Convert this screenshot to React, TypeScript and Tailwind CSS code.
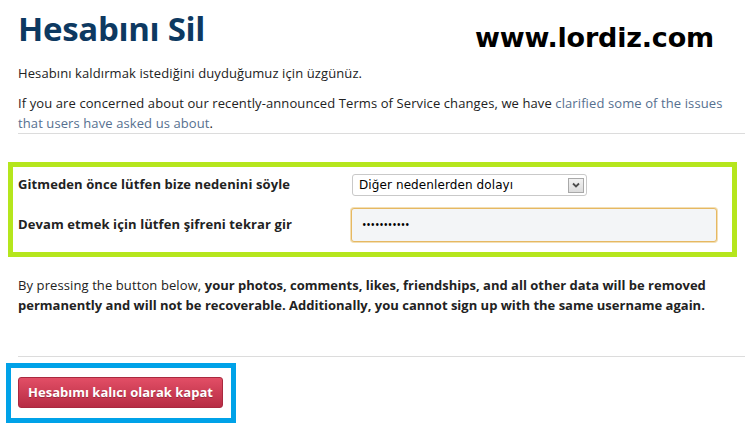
import React from "react";

const body = { fontFamily: '"Open Sans", "Liberation Sans", sans-serif' };

function SelectBox() {
  return (
    <div className="flex items-center justify-between w-[235px] h-[22px] border border-[#c9c9c9] rounded-[3px] bg-white pl-[6px] pr-[2px]">
      <span className="text-[12px] text-black" style={{ fontFamily: '"DejaVu Sans", Verdana, sans-serif' }}>
        Diğer nedenlerden dolayı
      </span>
      <span className="flex items-center justify-center w-[16px] h-[15px] border border-[#a9a9a9] bg-gradient-to-b from-[#f2f2f2] to-[#dcdcdc]">
        <svg width="8" height="6" viewBox="0 0 8 6">
          <path d="M1 1.5 L4 4.5 L7 1.5" fill="none" stroke="#4d4d4d" strokeWidth="1.8" />
        </svg>
      </span>
    </div>
  );
}

export default function App() {
  return (
    <div className="relative w-[750px] h-[430px] bg-white overflow-hidden text-[#222] pl-[18px] pr-[5px] tracking-[0.1px]" style={body}>
      {/* watermark */}
      <div
        className="absolute left-[475px] top-[18px] text-[27px] leading-[40px] font-bold text-black tracking-[-0.2px]"
        style={{ fontFamily: '"DejaVu Sans", Verdana, sans-serif' }}
      >
        www.lordiz.com
      </div>

      <h1 className="pt-[9px] text-[33px] leading-[40px] font-bold text-[#0d3961] tracking-[-0.3px]">Hesabını Sil</h1>

      <p className="mt-[14px] text-[13px] leading-[20px]">Hesabını kaldırmak istediğini duyduğumuz için üzgünüz.</p>
      <p className="mt-[10px] text-[13px] leading-[20px]">
        If you are concerned about our recently-announced Terms of Service changes, we have{" "}
        <a className="text-[#56708f]">clarified some of the issues that users have asked us about</a>.
      </p>
      <div className="h-px bg-[#dcdcdc]" />

      {/* Form box */}
      <div className="mt-[28px] ml-[-10px] w-[729px] border-[5px] border-[#b5e61d] pl-[5px] pt-[7px] pb-[10px]">
        <div className="flex items-center">
          <label className="w-[334px] text-[13px] font-bold">Gitmeden önce lütfen bize nedenini söyle</label>
          <SelectBox />
        </div>
        <div className="flex items-center mt-[12px]">
          <label className="w-[333px] text-[13px] font-bold">Devam etmek için lütfen şifreni tekrar gir</label>
          <div className="flex items-center w-[366px] h-[34px] border border-[#e6b862] rounded-[3px] bg-[#f3f5f7] pl-[10px] shadow-[0_0_0_1px_#f3dfb4]">
            <span className="text-[12px] tracking-[-0.2px] text-black">•••••••••••</span>
          </div>
        </div>
      </div>

      <p className="mt-[18px] pr-[20px] text-[13px] leading-[20px]">
        By pressing the button below,{" "}
        <strong className="font-bold tracking-normal">
          your photos, comments, likes, friendships, and all other data will be removed permanently and will not be
          recoverable. Additionally, you cannot sign up with the same username again.
        </strong>
      </p>

      <div className="mt-[41px] h-px bg-[#dcdcdc]" />

      {/* Button box */}
      <div className="mt-[6px] ml-[-12px] inline-block border-[5px] border-[#00a2e8] pl-[7px] pr-[8px] pt-[9px] pb-[10px]">
        <button
          type="button"
          className="w-[205px] h-[31px] rounded-[3px] border border-[#a9293f] bg-gradient-to-b from-[#e24e66] to-[#b72c44] text-white text-[13px] font-bold tracking-normal [text-shadow:0_1px_0_rgba(0,0,0,0.25)]"
        >
          Hesabımı kalıcı olarak kapat
        </button>
      </div>
    </div>
  );
}
